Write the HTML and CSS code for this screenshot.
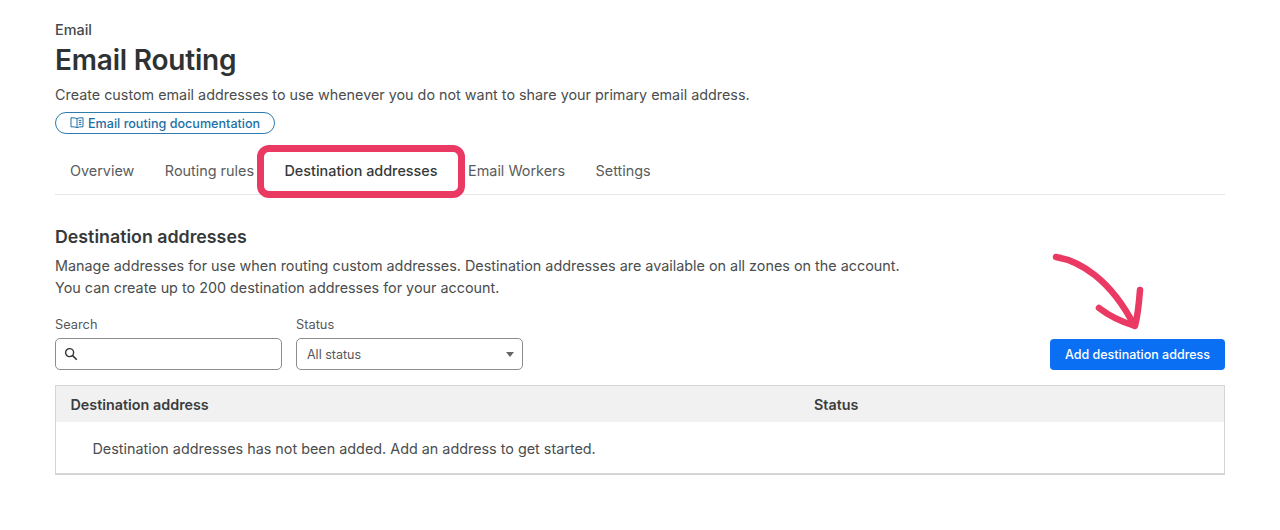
FILE: index.html
```html
<!DOCTYPE html>
<html lang="en">
<head>
<meta charset="utf-8">
<title>Email Routing</title>
<link rel="stylesheet" href="styles.css">
</head>
<body>
<main class="page">
  <div class="crumb">Email</div>
  <h1 class="title">Email Routing</h1>
  <p class="lead">Create custom email addresses to use whenever you do not want to share your primary email address.</p>
  <a class="doc-pill" href="#">
    <svg class="doc-icon" viewBox="0 0 14 12" width="14" height="12" aria-hidden="true"><path d="M7 1.6C6 1 4 .8 1 .8v9c3 0 5 .2 6 1 1-.8 3-1 6-1v-9c-3 0-5 .2-6 .8zM7 1.6v9.2M8.8 3.4h2.6M8.8 5.4h2.6M8.8 7.4h2.6" fill="none" stroke="currentColor" stroke-width="1"/></svg>
    Email routing documentation
  </a>
  <nav class="tabs">
    <a class="tab">Overview</a>
    <a class="tab">Routing rules</a>
    <a class="tab tab-active">Destination addresses</a>
    <a class="tab">Email Workers</a>
    <a class="tab">Settings</a>
    <span class="tab-mark"></span>
  </nav>
  <h2 class="section-title">Destination addresses</h2>
  <p class="section-text">Manage addresses for use when routing custom addresses. Destination addresses are available on all zones on the account.<br>You can create up to 200 destination addresses for your account.</p>
  <div class="controls">
    <label class="field">
      <span class="field-label">Search</span>
      <span class="input search">
        <svg viewBox="0 0 14 14" width="14" height="14" aria-hidden="true"><circle cx="5.6" cy="5.6" r="4" fill="none" stroke="#333" stroke-width="1.4"/><path d="M8.6 8.6l4.2 4.2" stroke="#333" stroke-width="1.6"/></svg>
      </span>
    </label>
    <label class="field">
      <span class="field-label">Status</span>
      <span class="input select">All status<span class="caret"></span></span>
    </label>
    <div class="action">
      <svg class="arrow" viewBox="0 0 100 90" width="100" height="90" aria-hidden="true"><path d="M6 8C30 12 60 30 84 76" fill="none" stroke="#ea3a64" stroke-width="6.5" stroke-linecap="round"/><path d="M90 41C89 54 88 66 85 77C72 73 58 66 49 59" fill="none" stroke="#ea3a64" stroke-width="6.5" stroke-linecap="round" stroke-linejoin="round"/></svg>
      <button class="primary" type="button">Add destination address</button>
    </div>
  </div>
  <section class="table">
    <div class="thead"><span class="th-addr">Destination address</span><span>Status</span></div>
    <div class="empty">Destination addresses has not been added. Add an address to get started.</div>
  </section>
</main>
</body>
</html>
```
FILE: styles.css
```css
* { box-sizing: border-box; }
html, body { margin: 0; height: 530px; overflow: hidden; background: #fff; }
body { font-family: Inter, "Liberation Sans", sans-serif; color: #36393a; }
.page { padding: 21px 55px 0; }
.crumb { font-size: 14.4px; line-height: 18px; font-weight: 500; color: #45484a; }
.title { margin: 2px 0 0; font-size: 28px; line-height: 38px; font-weight: 600; color: #2f3233; letter-spacing: -.2px; }
.lead { margin: 6px 0 0; font-size: 14.35px; line-height: 19px; color: #4a4d4e; }
.doc-pill { display: inline-flex; align-items: center; gap: 4px; width: 220px; height: 22px; margin-top: 8px; padding-left: 14px; border: 1px solid #2c7cb0; border-radius: 11px; color: #1d6fa5; font-size: 12.6px; font-weight: 500; text-decoration: none; }
.doc-icon { flex: none; }
.tabs { position: relative; display: flex; height: 49px; margin-top: 12px; padding-left: 15px; gap: 30.5px; border-bottom: 1px solid #e6e6e6; font-size: 14.4px; }
.tab { line-height: 49px; color: #595c5d; white-space: nowrap; }
.tab-active { color: #36393a; font-weight: 500; }
.tab-mark { position: absolute; left: 202px; top: -1px; width: 208px; height: 53px; border: 7px solid #ea3a64; border-radius: 12px; }
.section-title { margin: 31px 0 0; font-size: 17.8px; line-height: 22px; font-weight: 600; color: #36393a; }
.section-text { margin: 7px 0 0; font-size: 14.36px; line-height: 22px; color: #4a4d4e; }
.controls { display: flex; align-items: flex-end; gap: 14px; margin-top: 18px; }
.field { display: flex; flex-direction: column; gap: 5px; width: 227px; }
.field-label { font-size: 12.8px; line-height: 16px; color: #55585a; }
.input { display: flex; align-items: center; height: 32px; padding: 0 10px; border: 1px solid #8a8d8e; border-radius: 5px; background: #fff; font-size: 12.5px; color: #55585a; }
.search { padding-left: 8px; }
.select { justify-content: space-between; padding-right: 8px; }
.caret { width: 0; height: 0; border: 4.5px solid transparent; border-top: 5px solid #666; border-bottom: 0; }
.action { position: relative; margin-left: auto; }
.arrow { position: absolute; left: 0; top: -90px; }
.primary { display: block; width: 175px; height: 31px; border: 0; border-radius: 4px; background: #0a6ff2; color: #fff; font: 500 12.5px Inter, "Liberation Sans", sans-serif; }
.table { margin-top: 15px; border: 1px solid #d5d5d5; border-bottom-width: 2px; }
.thead { display: flex; height: 36px; align-items: center; padding-left: 14.5px; background: #f1f1f1; font-size: 14.35px; font-weight: 600; color: #3a3d3e; }
.th-addr { width: 743.5px; }
.empty { height: 51px; padding-left: 36.5px; font-size: 14.37px; line-height: 53px; color: #4a4d4e; }
```
